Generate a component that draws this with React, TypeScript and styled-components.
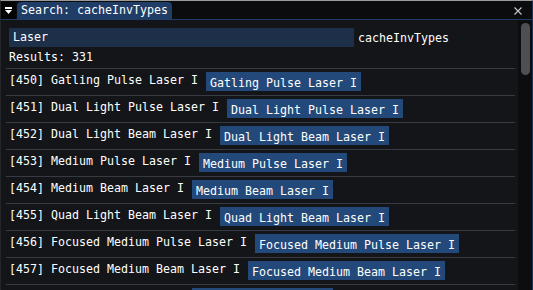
import React from "react";
import styled, { createGlobalStyle } from "styled-components";

const Global = createGlobalStyle`
  html, body { margin: 0; padding: 0; background: #131518; }
  body { font-family: "DejaVu Sans Mono", "Liberation Mono", monospace; }
`;

const Window = styled.div`
  width: 533px;
  height: 290px;
  box-sizing: border-box;
  overflow: hidden;
  display: flex;
  flex-direction: column;
  background: #131518;
  border-left: 1px solid #24262a;
  border-right: 1px solid #1c3252;
  border-top: 1px solid #9a9a9a;
  font-family: "DejaVu Sans Mono", "Liberation Mono", monospace;
  font-size: 11.63px;
  line-height: 13px;
  color: #ffffff;
`;

const TitleBar = styled.div`
  height: 18px;
  flex: none;
  display: flex;
  align-items: flex-end;
  background: #0b0c0e;
  border-bottom: 1px solid #1f3d66;
`;

const MenuButton = styled.div`
  width: 16px;
  height: 17px;
  margin-left: -1px;
  margin-right: 1px;
  display: flex;
  align-items: center;
  justify-content: center;
  background: #050506;
`;

const Tab = styled.div`
  height: 17px;
  box-sizing: border-box;
  padding: 2px 4px 0 4px;
  background: #1f3d66;
  border-radius: 4px 4px 0 0;
  white-space: pre;
`;

const Spacer = styled.div`
  flex: 1;
`;

const CloseButton = styled.div`
  width: 14px;
  height: 17px;
  margin-right: 7px;
  display: flex;
  align-items: center;
  justify-content: center;
`;

const Body = styled.div`
  flex: 1;
  display: flex;
  min-height: 0;
`;

const Content = styled.div`
  flex: 1;
  min-width: 0;
  padding: 8px 3px 0 8px;
  display: flex;
  flex-direction: column;
  overflow: hidden;
`;

const InputRow = styled.div`
  display: flex;
  align-items: center;
  gap: 4px;
  flex: none;
`;

const Input = styled.div`
  width: 345px;
  height: 19px;
  box-sizing: border-box;
  padding: 3px 4px 0 4px;
  background: #1d2f49;
  white-space: pre;
`;

const Label = styled.span`
  white-space: pre;
  padding-top: 1px;
`;

const Results = styled.div`
  margin: 4px 0 4px 0;
  height: 13px;
  flex: none;
  white-space: pre;
`;

const Row = styled.div`
  flex: none;
  margin-left: -3px;
  padding: 3px 0 4px 3px;
  border-top: 1px solid #393b43;
  display: flex;
  align-items: flex-start;
  gap: 8px;
`;

const ItemText = styled.span`
  margin-top: 2px;
  white-space: pre;
`;

const ItemButton = styled.div`
  height: 19px;
  box-sizing: border-box;
  padding: 5px 4px 0 4px;
  background: #23497a;
  white-space: pre;
`;

const Scrollbar = styled.div`
  width: 14px;
  flex: none;
  background: #0c0d0f;
  padding: 3px 2px 0 3px;
  box-sizing: border-box;
`;

const Grab = styled.div`
  width: 9px;
  height: 52px;
  border-radius: 5px;
  background: #4d4f53;
`;

const rows: [number, string][] = [
  [450, "Gatling Pulse Laser I"],
  [451, "Dual Light Pulse Laser I"],
  [452, "Dual Light Beam Laser I"],
  [453, "Medium Pulse Laser I"],
  [454, "Medium Beam Laser I"],
  [455, "Quad Light Beam Laser I"],
  [456, "Focused Medium Pulse Laser I"],
  [457, "Focused Medium Beam Laser I"],
  [458, "Heavy Pulse Laser I"],
];

export default function App() {
  return (
    <>
      <Global />
      <Window>
        <TitleBar>
          <MenuButton>
            <svg width="9" height="8" viewBox="0 0 9 8">
              <rect x="1" y="0" width="7" height="2" fill="#fff" />
              <polygon points="1,3 8,3 4.5,7" fill="#fff" />
            </svg>
          </MenuButton>
          <Tab>Search: cacheInvTypes</Tab>
          <Spacer />
          <CloseButton>
            <svg width="8" height="8" viewBox="0 0 8 8">
              <path d="M0.5 0.5 L7.5 7.5 M7.5 0.5 L0.5 7.5" stroke="#c8c8c8" strokeWidth="1.1" />
            </svg>
          </CloseButton>
        </TitleBar>
        <Body>
          <Content>
            <InputRow>
              <Input>Laser</Input>
              <Label>cacheInvTypes</Label>
            </InputRow>
            <Results>Results: 331</Results>
            {rows.map(([id, name]) => (
              <Row key={id}>
                <ItemText>{`[${id}] ${name}`}</ItemText>
                <ItemButton>{name}</ItemButton>
              </Row>
            ))}
          </Content>
          <Scrollbar>
            <Grab />
          </Scrollbar>
        </Body>
      </Window>
    </>
  );
}
